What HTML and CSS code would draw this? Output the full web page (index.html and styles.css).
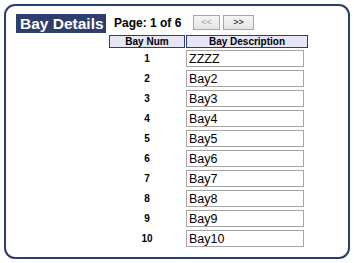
FILE: index.html
```html
<!DOCTYPE html>
<html>
<head>
<meta charset="utf-8">
<link rel="stylesheet" href="styles.css">
</head>
<body>
<div class="panel">
  <div class="toolbar">
    <div class="title">Bay Details</div>
    <div class="page">Page: 1 of 6</div>
    <div class="buttons">
      <button class="btn disabled">&lt;&lt;</button>
      <button class="btn">&gt;&gt;</button>
    </div>
  </div>
  <div class="grid">
    <div class="th">Bay Num</div>
    <div class="th">Bay Description</div>
    <div class="num">1</div><div class="cell"><input class="desc" value="ZZZZ"></div>
    <div class="num">2</div><div class="cell"><input class="desc" value="Bay2"></div>
    <div class="num">3</div><div class="cell"><input class="desc" value="Bay3"></div>
    <div class="num">4</div><div class="cell"><input class="desc" value="Bay4"></div>
    <div class="num">5</div><div class="cell"><input class="desc" value="Bay5"></div>
    <div class="num">6</div><div class="cell"><input class="desc" value="Bay6"></div>
    <div class="num">7</div><div class="cell"><input class="desc" value="Bay7"></div>
    <div class="num">8</div><div class="cell"><input class="desc" value="Bay8"></div>
    <div class="num">9</div><div class="cell"><input class="desc" value="Bay9"></div>
    <div class="num">10</div><div class="cell"><input class="desc" value="Bay10"></div>
  </div>
</div>
</body>
</html>
```
FILE: styles.css
```css
html, body {
  margin: 0;
  padding: 0;
  background: #ffffff;
}
body {
  font-family: "Liberation Sans", Arial, sans-serif;
}
.panel {
  box-sizing: border-box;
  margin: 4px 0 0 4px;
  width: 346px;
  height: 255px;
  border: 2px solid #2d3d6c;
  border-radius: 11px;
  padding: 8px 0 0 10px;
}
.toolbar {
  display: flex;
  align-items: flex-start;
  height: 21px;
}
.title {
  box-sizing: border-box;
  width: 90px;
  height: 19px;
  background: #2d3d6c;
  color: #ffffff;
  font-weight: bold;
  font-size: 15.5px;
  line-height: 19px;
  padding-left: 4px;
  white-space: nowrap;
}
.page {
  margin-left: 8px;
  margin-top: 3px;
  font-weight: bold;
  font-size: 12px;
  line-height: 13px;
  color: #000;
  width: 79px;
}
.buttons {
  display: flex;
  gap: 3px;
  margin-top: 1px;
}
.btn {
  box-sizing: border-box;
  height: 15px;
  padding: 0;
  margin: 0;
  border: 1px solid #a8a8a8;
  background: linear-gradient(#f6f6f6, #e4e4e4);
  font-family: "Liberation Sans", Arial, sans-serif;
  font-size: 9px;
  line-height: 13px;
  color: #000;
}
.btn:first-child { width: 27px; }
.btn:last-child { width: 31px; }
.btn.disabled { color: #a0a0a0; }
.grid {
  display: grid;
  grid-template-columns: 76px 122px;
  column-gap: 1px;
  grid-template-rows: 13px repeat(10, 20px);
  margin-left: 93px;
  margin-top: 0;
}
.th {
  box-sizing: border-box;
  background: #e6e6f6;
  border: 1px solid #2d3d6c;
  font-weight: bold;
  font-size: 10px;
  line-height: 11px;
  text-align: center;
  color: #000;
}
.num {
  font-weight: bold;
  font-size: 10px;
  display: flex;
  align-items: center;
  justify-content: center;
  color: #000;
}
.cell {
  display: flex;
  align-items: flex-start;
}
.desc {
  box-sizing: border-box;
  width: 118px;
  height: 17px;
  margin: 2px 0 0 0;
  border: 1px solid #a5a5a5;
  padding: 0 2px;
  font-family: "Liberation Sans", Arial, sans-serif;
  font-size: 12.5px;
  color: #000;
  background: #fff;
  outline: none;
}
```
